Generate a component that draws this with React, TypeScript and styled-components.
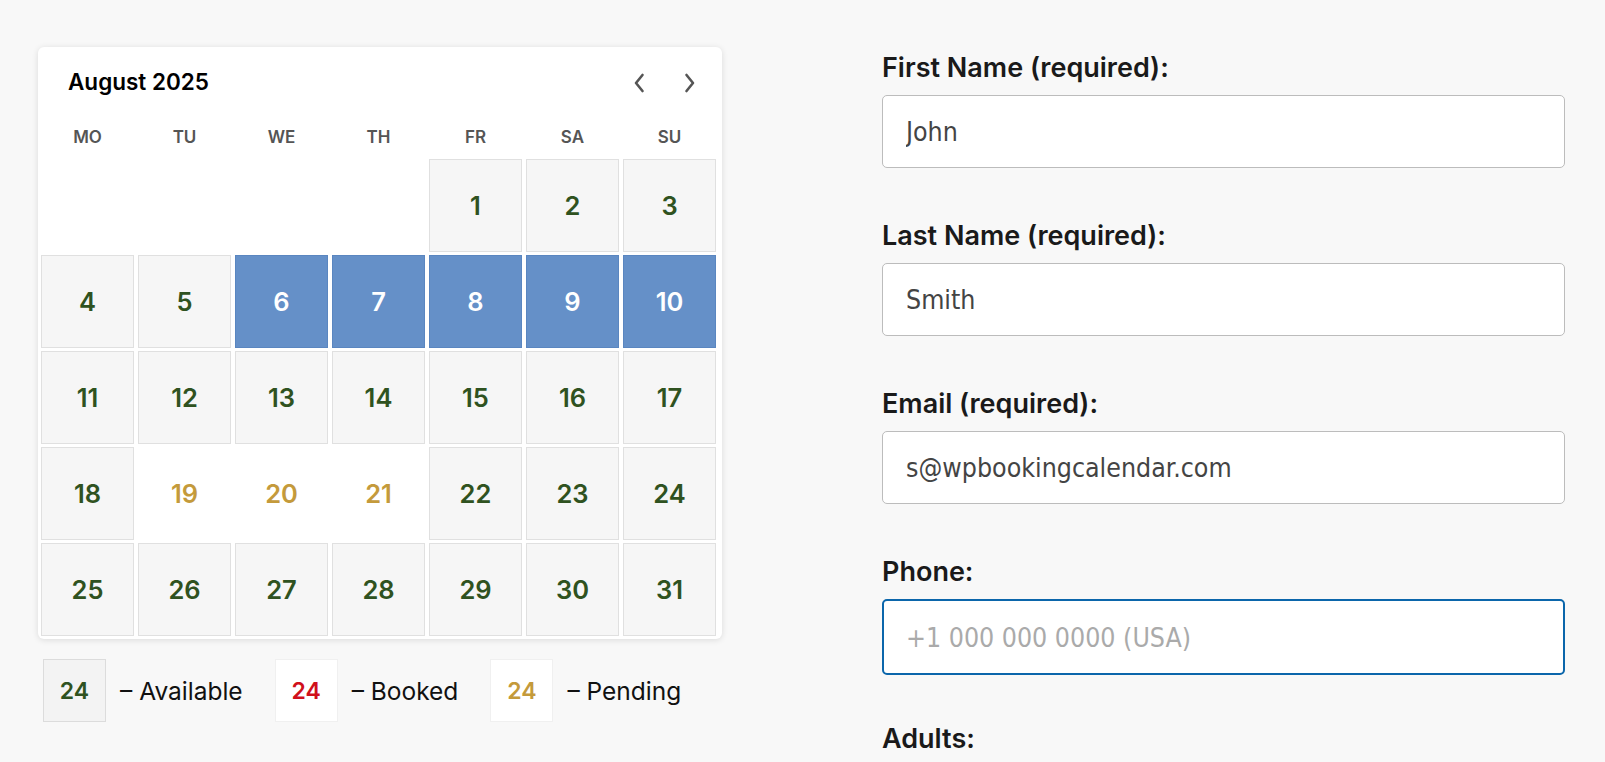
import React from "react";
import styled, { createGlobalStyle } from "styled-components";

const GlobalStyle = createGlobalStyle`
  html, body {
    margin: 0;
    padding: 0;
    background: #f8f8f8;
    font-family: Inter, "Noto Sans", sans-serif;
  }
  * { box-sizing: border-box; }
`;

const Page = styled.div`
  display: flex;
  align-items: flex-start;
  gap: 160px;
  padding: 47px 40px 0 38px;
`;

const LeftCol = styled.div`
  width: 684px;
  flex: none;
  display: flex;
  flex-direction: column;
  gap: 20px;
`;

const Card = styled.div`
  background: #fff;
  border-radius: 6px;
  box-shadow: 0 1px 6px rgba(0, 0, 0, 0.12);
  padding: 0 6px 3px 3px;
`;

const Header = styled.div`
  height: 68px;
  display: flex;
  align-items: center;
  padding: 0 20px 0 27px;
`;

const Title = styled.div`
  flex: 1;
  font-size: 22.5px;
  font-weight: 600;
  color: #000;
`;

const NavGroup = styled.div`
  display: flex;
  gap: 39px;
  align-items: center;
  margin-top: 4px;
`;

const NavButton = styled.button`
  border: 0;
  background: none;
  padding: 0;
  width: 12px;
  height: 20px;
  display: flex;
  align-items: center;
  justify-content: center;
  cursor: pointer;
`;

const WeekRow = styled.div`
  display: grid;
  grid-template-columns: repeat(7, 1fr);
  column-gap: 4px;
  height: 44px;
  align-items: center;
`;

const WeekDay = styled.div`
  text-align: center;
  font-size: 17px;
  font-weight: 600;
  color: #555;
`;

const DaysGrid = styled.div`
  display: grid;
  grid-template-columns: repeat(7, 1fr);
  grid-auto-rows: 93px;
  column-gap: 4px;
  row-gap: 3px;
`;

type Status = "empty" | "available" | "selected" | "pending";

const Day = styled.div<{ $status: Status }>`
  display: flex;
  align-items: center;
  justify-content: center;
  font-size: 25.5px;
  font-weight: 600;
  border: 1px solid
    ${(p) =>
      p.$status === "available"
        ? "#e0e0e0"
        : p.$status === "selected"
        ? "#5a86c0"
        : "transparent"};
  background: ${(p) =>
    p.$status === "available"
      ? "#f6f6f6"
      : p.$status === "selected"
      ? "#6590c8"
      : "transparent"};
  color: ${(p) =>
    p.$status === "selected"
      ? "#fff"
      : p.$status === "pending"
      ? "#c49a3b"
      : "#2f5220"};
`;

const Legend = styled.div`
  display: flex;
  align-items: center;
  padding-left: 5px;
`;

const LegendItem = styled.div`
  display: flex;
  align-items: center;
  gap: 14px;
  margin-right: 32px;
`;

const LegendBox = styled.div<{ $kind: "available" | "booked" | "pending" }>`
  width: 63px;
  height: 63px;
  display: flex;
  align-items: center;
  justify-content: center;
  font-size: 23px;
  font-weight: 600;
  background: ${(p) => (p.$kind === "available" ? "#f3f3f3" : "#fff")};
  border: 1px solid ${(p) => (p.$kind === "available" ? "#dcdcdc" : "#f0f0f0")};
  color: ${(p) =>
    p.$kind === "available" ? "#2f5220" : p.$kind === "booked" ? "#d0101b" : "#c49a3b"};
`;

const LegendText = styled.span`
  font-size: 24.5px;
  color: #111;
`;

const Form = styled.form`
  width: 683px;
  flex: none;
  padding-top: 6px;
  display: flex;
  flex-direction: column;
  gap: 53px;
`;

const Field = styled.div<{ $tight?: boolean }>`
  display: flex;
  flex-direction: column;
  gap: 12px;
  margin-bottom: ${(p) => (p.$tight ? "-4px" : "0")};
`;

const Label = styled.label`
  font-size: 27px;
  line-height: 30px;
  font-weight: 600;
  color: #1a1a1a;
`;

const Input = styled.input<{ $focused?: boolean }>`
  height: ${(p) => (p.$focused ? "76px" : "73px")};
  width: 100%;
  border-radius: 5px;
  border: ${(p) => (p.$focused ? "2.5px solid #0b66ab" : "1px solid #bcbcbc")};
  background: #fff;
  padding: 0 ${(p) => (p.$focused ? "22px" : "23px")};
  font-family: "DejaVu Sans Condensed", "DejaVu Sans", sans-serif;
  font-size: 26.5px;
  color: #444;
  outline: none;
  &::placeholder {
    color: #aaa;
  }
`;

const Chevron = ({ dir }: { dir: "left" | "right" }) => (
  <svg width="12" height="20" viewBox="0 0 12 20">
    <polyline
      points={dir === "left" ? "9.5,2 3,10 9.5,18" : "2.5,2 9,10 2.5,18"}
      fill="none"
      stroke="#555"
      strokeWidth="2.6"
      strokeLinejoin="round"
      strokeLinecap="round"
    />
  </svg>
);

const weekdays = ["MO", "TU", "WE", "TH", "FR", "SA", "SU"];

function statusOf(d: number): Status {
  if (d >= 6 && d <= 10) return "selected";
  if (d >= 19 && d <= 21) return "pending";
  return "available";
}

export default function App() {
  const cells: (number | null)[] = [null, null, null, null];
  for (let d = 1; d <= 31; d++) cells.push(d);

  return (
    <>
      <GlobalStyle />
      <Page>
        <LeftCol>
          <Card>
            <Header>
              <Title>August 2025</Title>
              <NavGroup>
                <NavButton aria-label="Previous month">
                  <Chevron dir="left" />
                </NavButton>
                <NavButton aria-label="Next month">
                  <Chevron dir="right" />
                </NavButton>
              </NavGroup>
            </Header>
            <WeekRow>
              {weekdays.map((w) => (
                <WeekDay key={w}>{w}</WeekDay>
              ))}
            </WeekRow>
            <DaysGrid>
              {cells.map((d, i) =>
                d === null ? (
                  <Day key={`e${i}`} $status="empty" />
                ) : (
                  <Day key={d} $status={statusOf(d)}>
                    {d}
                  </Day>
                )
              )}
            </DaysGrid>
          </Card>
          <Legend>
            <LegendItem>
              <LegendBox $kind="available">24</LegendBox>
              <LegendText>– Available</LegendText>
            </LegendItem>
            <LegendItem>
              <LegendBox $kind="booked">24</LegendBox>
              <LegendText>– Booked</LegendText>
            </LegendItem>
            <LegendItem>
              <LegendBox $kind="pending">24</LegendBox>
              <LegendText>– Pending</LegendText>
            </LegendItem>
          </Legend>
        </LeftCol>
        <Form onSubmit={(e) => e.preventDefault()}>
          <Field>
            <Label>First Name (required):</Label>
            <Input defaultValue="John" />
          </Field>
          <Field>
            <Label>Last Name (required):</Label>
            <Input defaultValue="Smith" />
          </Field>
          <Field>
            <Label>Email (required):</Label>
            <Input defaultValue="s@wpbookingcalendar.com" />
          </Field>
          <Field $tight>
            <Label>Phone:</Label>
            <Input $focused placeholder="+1 000 000 0000 (USA)" />
          </Field>
          <Field>
            <Label>Adults:</Label>
          </Field>
        </Form>
      </Page>
    </>
  );
}
